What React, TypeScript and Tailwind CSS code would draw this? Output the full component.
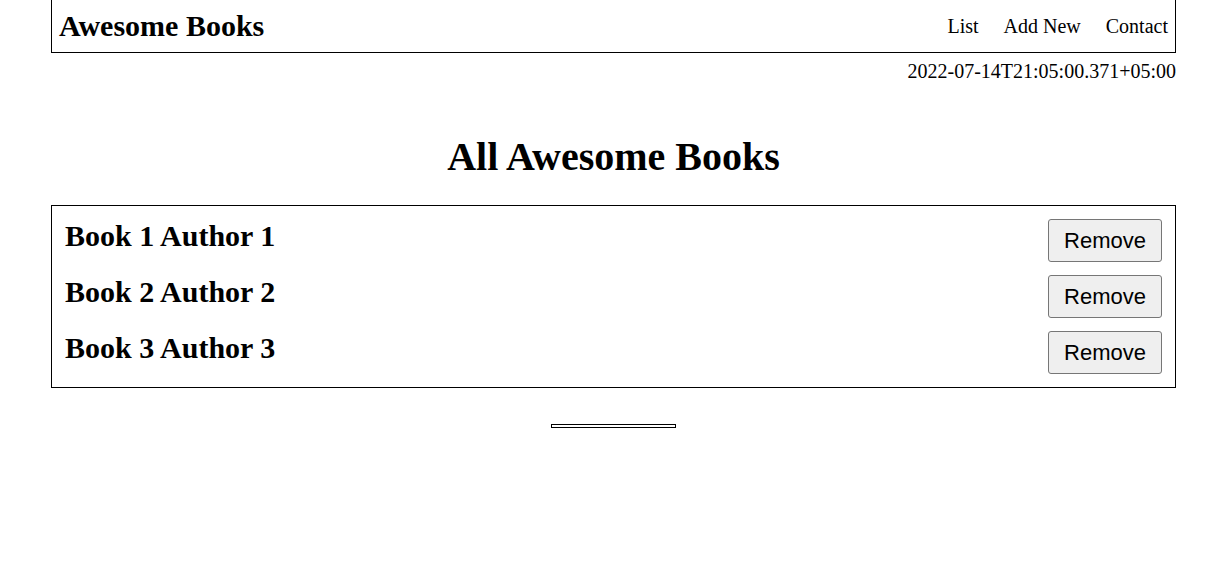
const books = [
  { title: "Book 1", author: "Author 1" },
  { title: "Book 2", author: "Author 2" },
  { title: "Book 3", author: "Author 3" },
];

export default function App() {
  return (
    <div className="min-h-[565px] bg-white text-black font-['Liberation_Serif','Times_New_Roman',serif]">
      <div className="ml-[51px] w-[1125px]">
        <header className="flex h-[53px] items-center justify-between border-x border-b border-black px-[7px]">
          <h1 className="text-[30px] font-bold leading-[34px]">Awesome Books</h1>
          <nav className="flex gap-[25px] text-[20px] leading-[23px]">
            <a href="#list">List</a>
            <a href="#add">Add New</a>
            <a href="#contact">Contact</a>
          </nav>
        </header>

        <p className="mt-[7px] text-right text-[20px] leading-[23px]">
          2022-07-14T21:05:00.371+05:00
        </p>

        <h2 className="mt-[51px] mb-[25px] text-center text-[40px] font-bold leading-[46px]">
          All Awesome Books
        </h2>

        <ul className="flex flex-col gap-[13px] border border-black p-[13px]">
          {books.map((b) => (
            <li key={b.title} className="flex items-start justify-between">
              <span className="text-[30px] font-bold leading-[34px]">
                {b.title} {b.author}
              </span>
              <button className="h-[43px] w-[114px] rounded-[3px] border border-[#767676] bg-[#efefef] font-['Liberation_Sans',Arial,sans-serif] text-[22px] leading-[25px] text-black">
                Remove
              </button>
            </li>
          ))}
        </ul>

        <div className="mt-[36px] flex justify-center">
          <div className="h-[4px] w-[125px] border border-black" />
        </div>
      </div>
    </div>
  );
}
